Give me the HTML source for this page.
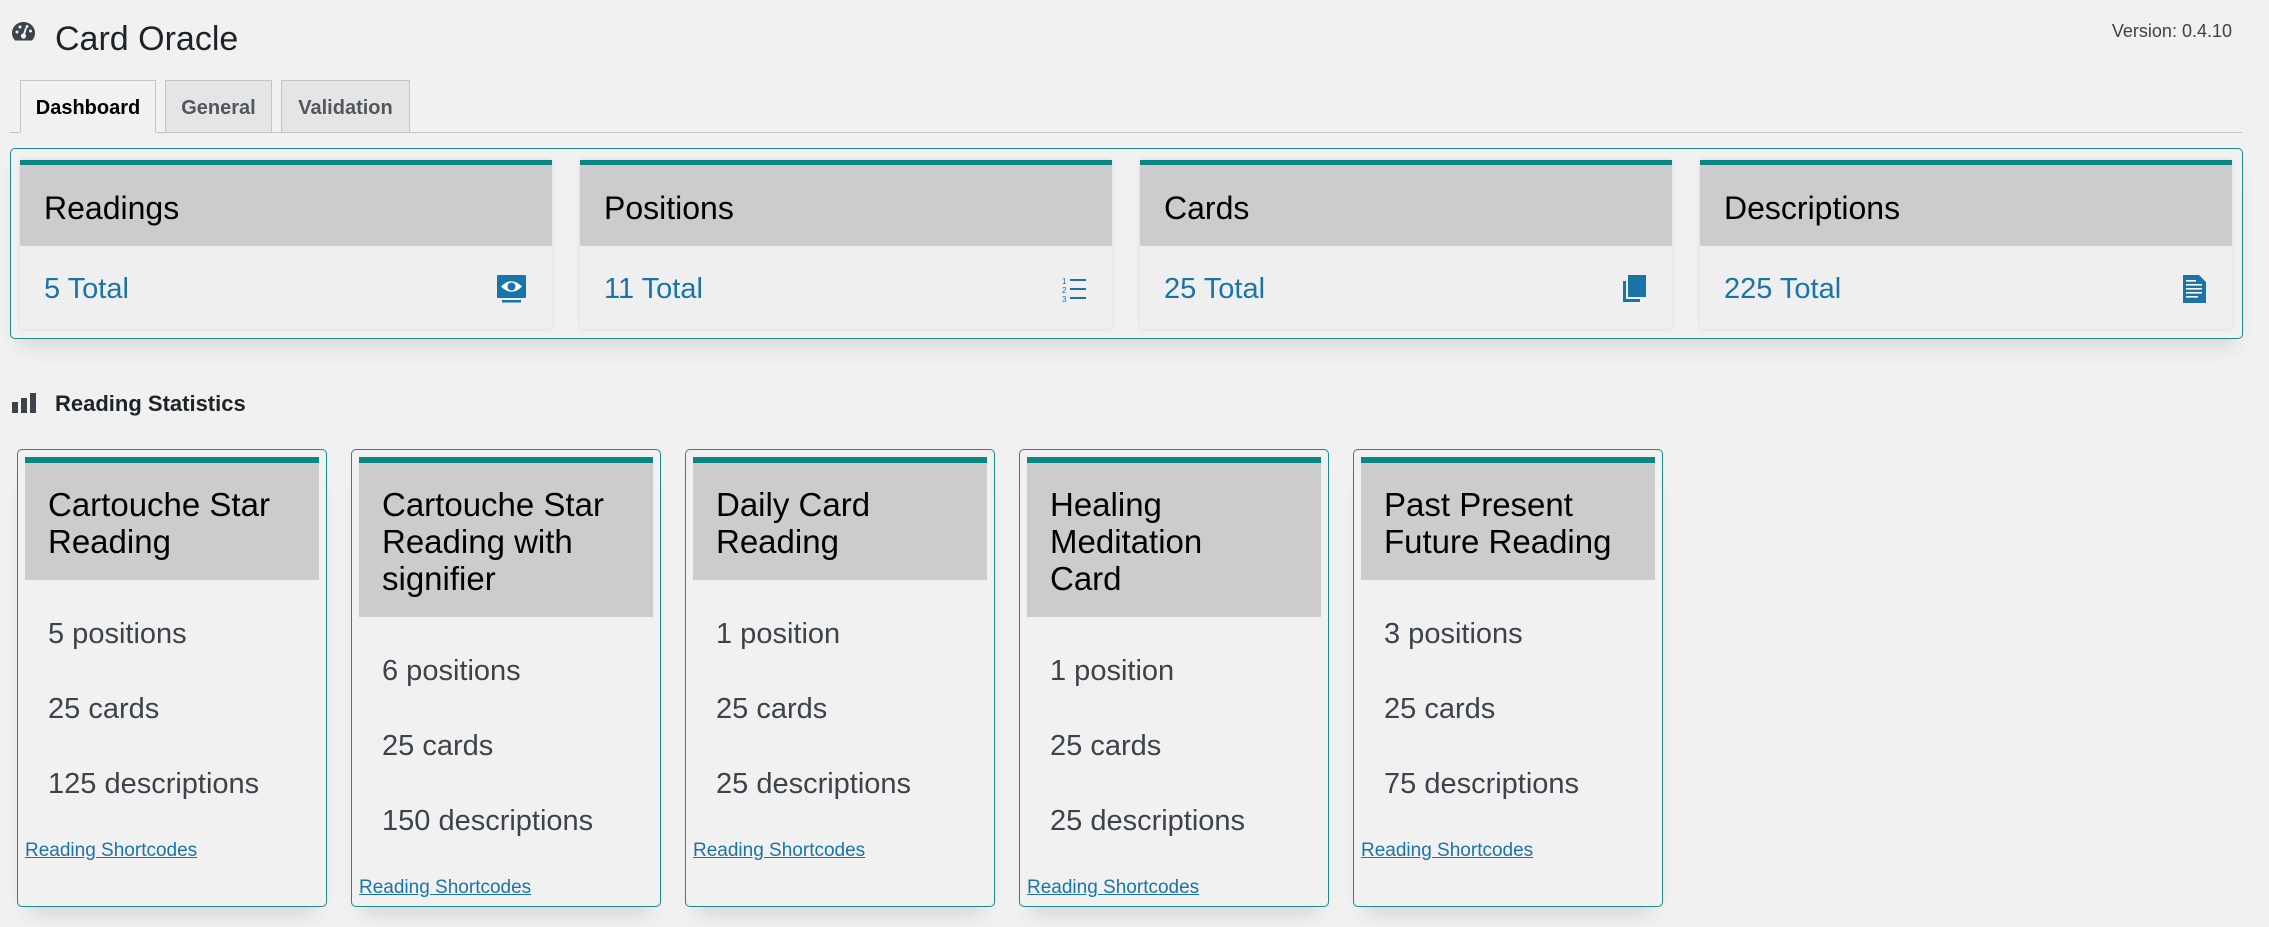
<!DOCTYPE html>
<html><head><meta charset="utf-8"><style>
*{box-sizing:border-box;margin:0;padding:0}
body{width:2269px;height:927px;background:#f1f1f1;font-family:"Liberation Sans",sans-serif;position:relative;overflow:hidden;color:#1d2327}
.abs{position:absolute}
.title{left:55px;top:19px;font-size:34px;line-height:40px;color:#1d2327}
.ver{right:37px;top:21px;font-size:18px;color:#3c434a}
.tab{top:80px;height:53px;border:1px solid #c3c4c7;background:#e5e5e5;font-size:20px;font-weight:bold;color:#50575e;text-align:center;line-height:54px}
.tabline{left:10px;right:27px;top:132px;border-top:1px solid #c3c4c7}
.box{left:10px;top:148px;width:2233px;height:191px;border:1.5px solid #1b8a8a;border-radius:5px;box-shadow:0 14px 20px -8px rgba(0,0,0,.12)}
.tc{top:160px;width:532px;height:169px;background:#efefef;box-shadow:0 0 4px rgba(0,0,0,.1);border-radius:3px}
.tc .bar{height:5px;background:#0b8783}
.tc .hd{height:81px;background:#cccccc;padding:23px 0 0 24px;font-size:32px;line-height:40px;color:#000}
.tc .bd{padding:25px 26px 0 24px;font-size:29px;line-height:36px;color:#1a74a8;display:flex;justify-content:space-between;align-items:center}
.rs{left:55px;top:391px;font-size:22px;font-weight:bold;color:#1d2327}
.sc{top:449px;width:310px;height:458px;border:1.5px solid #1b8a8a;border-radius:5px;background:#f1f1f1;padding:7px 7px 0 7px;box-shadow:0 18px 20px -12px rgba(0,0,0,.13)}
.sc .bar{height:6px;background:#0b8783}
.sc .hd{background:#cccccc;padding:23px 10px 20px 23px;font-size:33px;line-height:37px;color:#000}
.sc .it{padding-left:23px;font-size:29px;line-height:75px;color:#3c434a}
.sc .its{margin-top:17px}
.sc a{display:block;margin-top:17px;font-size:19px;line-height:24px;color:#1a74a8;text-decoration:underline}
</style></head><body>
<svg class="abs" style="left:11px;top:21px" width="25" height="21" viewBox="0 0 25 21"><path d="M12.5 1C6 1 1 6 1 12c0 3 1 5.5 3 7.5h17c2-2 3-4.5 3-7.5C24 6 19 1 12.5 1z" fill="#3c434a"/><circle cx="12.5" cy="15" r="2.6" fill="#f1f1f1"/><path d="M12.5 15L15 7" stroke="#f1f1f1" stroke-width="2"/><circle cx="6" cy="11" r="1.5" fill="#f1f1f1"/><circle cx="9" cy="6" r="1.5" fill="#f1f1f1"/><circle cx="16" cy="5.5" r="1.5" fill="#f1f1f1"/><circle cx="19.5" cy="10" r="1.5" fill="#f1f1f1"/></svg>
<div class="abs title">Card Oracle</div>
<div class="abs ver">Version: 0.4.10</div>
<div class="abs tabline"></div>
<div class="abs tab" style="left:20px;width:136px;background:#f1f1f1;border-bottom-color:#f1f1f1;color:#000">Dashboard</div>
<div class="abs tab" style="left:165px;width:107px">General</div>
<div class="abs tab" style="left:281px;width:129px">Validation</div>
<div class="abs box"></div>
<div class="abs tc" style="left:20px"><div class="bar"></div><div class="hd">Readings</div><div class="bd"><span>5 Total</span>
<svg width="29" height="28" viewBox="0 0 29 28"><rect x="0" y="0" width="29" height="23" rx="1" fill="#1a74a8"/><path d="M4 11.5Q14.5 1 25 11.5Q14.5 22 4 11.5z" fill="#fff"/><circle cx="14.5" cy="11.5" r="4" fill="#1a74a8"/><rect x="5" y="25" width="19" height="2.5" fill="#1a74a8"/></svg></div></div>
<div class="abs tc" style="left:580px"><div class="bar"></div><div class="hd">Positions</div><div class="bd"><span>11 Total</span>
<svg width="24" height="26" viewBox="0 0 24 26"><g fill="#1a74a8"><rect x="8" y="3" width="16" height="2"/><rect x="8" y="12" width="16" height="2"/><rect x="8" y="21" width="16" height="2"/><text x="0" y="8" font-size="8" font-family="Liberation Sans">1</text><text x="0" y="17" font-size="8" font-family="Liberation Sans">2</text><text x="0" y="26" font-size="8" font-family="Liberation Sans">3</text></g></svg></div></div>
<div class="abs tc" style="left:1140px"><div class="bar"></div><div class="hd">Cards</div><div class="bd"><span>25 Total</span>
<svg width="24" height="28" viewBox="0 0 24 28"><path d="M1 6h3v18h14v3H1z" fill="#1a74a8"/><rect x="6" y="0" width="18" height="22" fill="#1a74a8"/></svg></div></div>
<div class="abs tc" style="left:1700px"><div class="bar"></div><div class="hd">Descriptions</div><div class="bd"><span>225 Total</span>
<svg width="23" height="28" viewBox="0 0 23 28"><path d="M0 0h16l7 7v21H0z" fill="#1a74a8"/><g fill="#fff"><rect x="3" y="5" width="10" height="1.6"/><rect x="3" y="9" width="16" height="1.6"/><rect x="3" y="13" width="16" height="1.6"/><rect x="3" y="17" width="16" height="1.6"/><rect x="3" y="21" width="12" height="1.6"/></g></svg></div></div>
<svg class="abs" style="left:12px;top:393px" width="24" height="20" viewBox="0 0 24 20"><g fill="#3c434a"><rect x="0" y="9" width="6" height="11"/><rect x="9" y="5" width="6" height="15"/><rect x="18" y="0" width="6" height="20"/></g></svg>
<div class="abs rs">Reading Statistics</div>

<div class="abs sc" style="left:17px"><div class="bar"></div><div class="hd">Cartouche Star<br>Reading</div><div class="its"><div class="it">5 positions</div><div class="it">25 cards</div><div class="it">125 descriptions</div></div><a>Reading Shortcodes</a></div>
<div class="abs sc" style="left:351px"><div class="bar"></div><div class="hd">Cartouche Star<br>Reading with<br>signifier</div><div class="its"><div class="it">6 positions</div><div class="it">25 cards</div><div class="it">150 descriptions</div></div><a>Reading Shortcodes</a></div>
<div class="abs sc" style="left:685px"><div class="bar"></div><div class="hd">Daily Card<br>Reading</div><div class="its"><div class="it">1 position</div><div class="it">25 cards</div><div class="it">25 descriptions</div></div><a>Reading Shortcodes</a></div>
<div class="abs sc" style="left:1019px"><div class="bar"></div><div class="hd">Healing<br>Meditation<br>Card</div><div class="its"><div class="it">1 position</div><div class="it">25 cards</div><div class="it">25 descriptions</div></div><a>Reading Shortcodes</a></div>
<div class="abs sc" style="left:1353px"><div class="bar"></div><div class="hd">Past Present<br>Future Reading</div><div class="its"><div class="it">3 positions</div><div class="it">25 cards</div><div class="it">75 descriptions</div></div><a>Reading Shortcodes</a></div>
</body></html>
